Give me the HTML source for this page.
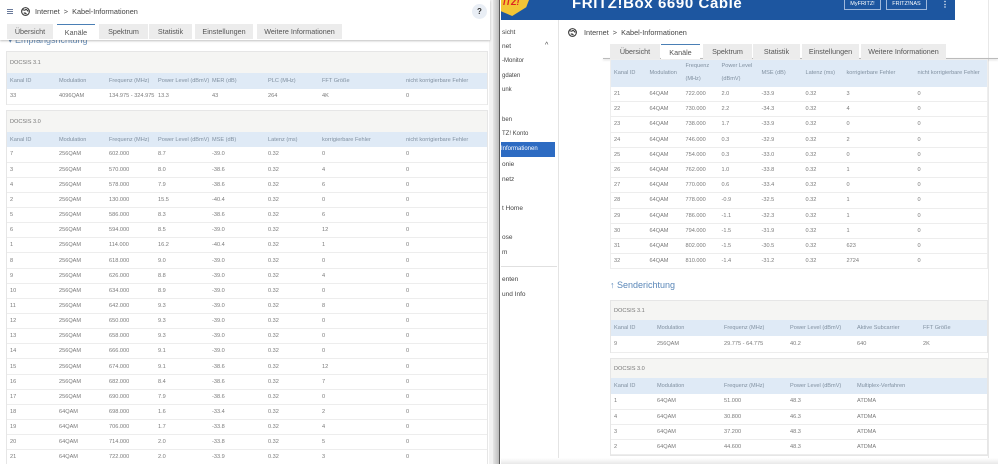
<!DOCTYPE html>
<html><head><meta charset="utf-8">
<style>
*{box-sizing:border-box;margin:0;padding:0}
body{width:998px;height:464px;overflow:hidden;background:#fff;font-family:"Liberation Sans",sans-serif;color:#555;position:relative}
.abs{position:absolute}
table{border-collapse:collapse;table-layout:fixed;position:absolute;font-size:5.6px;color:#7a7a7a}
td{padding-left:3px;white-space:nowrap;overflow:hidden;border-bottom:1px solid #ededed;vertical-align:middle}
tr.h td{background:#dfeaf6;color:#8090a0;border-bottom:none}
.box{position:absolute;background:#f5f5f3;border:1px solid #e6e6e6}
.box .t{position:absolute;left:3px;font-size:5.6px;color:#777}
.tab{position:absolute;height:15px;background:#ececec;font-size:7.2px;color:#555;text-align:center;line-height:16px}
.tab.a{background:#fff;border-top:1.5px solid #4a7fb5}
.side{position:absolute;left:502px;font-size:6.5px;color:#444}
</style></head><body>

<div class="abs" style="left:0;top:0;width:500px;height:464px;background:#fff;overflow:hidden">
  <div class="abs" style="left:0;top:0;width:490px;height:40px;background:#fff;box-shadow:0 1px 2px rgba(0,0,0,.25);z-index:2">
    <div class="abs" style="left:7px;top:9px;width:6px;height:1px;background:#6a7a9a;box-shadow:0 2px 0 #6a7a9a,0 4px 0 #6a7a9a"></div>
    <svg class="abs" style="left:21px;top:7px" width="9" height="9" viewBox="0 0 10 10"><circle cx="5" cy="5" r="4.3" fill="none" stroke="#333" stroke-width="1.2"/><path d="M2 3 Q4 4 5 3 T8 5 M3 7 Q5 6 6 8" stroke="#333" stroke-width="1.2" fill="none"/></svg>
    <div class="abs" style="left:35px;top:7px;font-size:7.3px;color:#444">Internet &nbsp;&gt;&nbsp; Kabel-Informationen</div>
    <div class="abs" style="left:472px;top:4px;width:15px;height:15px;border-radius:50%;background:#e9eef5;font-size:8px;font-weight:bold;text-align:center;line-height:15px;color:#333">?</div>
    <div class="tab" style="left:7px;top:24px;width:46px">Übersicht</div>
    <div class="tab a" style="left:57px;top:24px;width:38px">Kanäle</div>
    <div class="tab" style="left:99px;top:24px;width:49px">Spektrum</div>
    <div class="tab" style="left:149px;top:24px;width:43px">Statistik</div>
    <div class="tab" style="left:195px;top:24px;width:58px">Einstellungen</div>
    <div class="tab" style="left:257px;top:24px;width:85px">Weitere Informationen</div>
  </div>
  <div class="abs" style="left:8px;top:35px;font-size:9px;color:#6a8fb8">▾ Empfangsrichtung</div>

  <div class="box" style="left:6px;top:51px;width:482px;height:54px"><div class="t" style="top:8px">DOCSIS 3.1</div></div>
  <table style="left:7px;top:73px;width:480px">
    <colgroup><col style="width:49px"><col style="width:50px"><col style="width:49px"><col style="width:54px"><col style="width:56px"><col style="width:54px"><col style="width:84px"><col></colgroup>
    <tr class="h" style="height:16px"><td>Kanal ID</td><td>Modulation</td><td>Frequenz (MHz)</td><td>Power Level (dBmV)</td><td>MER (dB)</td><td>PLC (MHz)</td><td>FFT Größe</td><td>nicht korrigierbare Fehler</td></tr>
    <tr style="height:15px;background:#fff"><td>33</td><td>4096QAM</td><td>134.975 - 324.975</td><td>13.3</td><td>43</td><td>264</td><td>4K</td><td>0</td></tr>
  </table>

  <div class="box" style="left:6px;top:110px;width:482px;height:360px"><div class="t" style="top:8px">DOCSIS 3.0</div></div>
  <table style="left:7px;top:132px;width:480px;background:#fff">
    <colgroup><col style="width:49px"><col style="width:50px"><col style="width:49px"><col style="width:54px"><col style="width:56px"><col style="width:54px"><col style="width:84px"><col></colgroup>
    <tr class="h" style="height:15px"><td>Kanal ID</td><td>Modulation</td><td>Frequenz (MHz)</td><td>Power Level (dBmV)</td><td>MSE (dB)</td><td>Latenz (ms)</td><td>korrigierbare Fehler</td><td>nicht korrigierbare Fehler</td></tr>
    <tr style="height:15.15px"><td>7</td><td>256QAM</td><td>602.000</td><td>8.7</td><td>-39.0</td><td>0.32</td><td>0</td><td>0</td></tr>
    <tr style="height:15.15px"><td>3</td><td>256QAM</td><td>570.000</td><td>8.0</td><td>-38.6</td><td>0.32</td><td>4</td><td>0</td></tr>
    <tr style="height:15.15px"><td>4</td><td>256QAM</td><td>578.000</td><td>7.9</td><td>-38.6</td><td>0.32</td><td>6</td><td>0</td></tr>
    <tr style="height:15.15px"><td>2</td><td>256QAM</td><td>130.000</td><td>15.5</td><td>-40.4</td><td>0.32</td><td>0</td><td>0</td></tr>
    <tr style="height:15.15px"><td>5</td><td>256QAM</td><td>586.000</td><td>8.3</td><td>-38.6</td><td>0.32</td><td>6</td><td>0</td></tr>
    <tr style="height:15.15px"><td>6</td><td>256QAM</td><td>594.000</td><td>8.5</td><td>-39.0</td><td>0.32</td><td>12</td><td>0</td></tr>
    <tr style="height:15.15px"><td>1</td><td>256QAM</td><td>114.000</td><td>16.2</td><td>-40.4</td><td>0.32</td><td>1</td><td>0</td></tr>
    <tr style="height:15.15px"><td>8</td><td>256QAM</td><td>618.000</td><td>9.0</td><td>-39.0</td><td>0.32</td><td>0</td><td>0</td></tr>
    <tr style="height:15.15px"><td>9</td><td>256QAM</td><td>626.000</td><td>8.8</td><td>-39.0</td><td>0.32</td><td>4</td><td>0</td></tr>
    <tr style="height:15.15px"><td>10</td><td>256QAM</td><td>634.000</td><td>8.9</td><td>-39.0</td><td>0.32</td><td>0</td><td>0</td></tr>
    <tr style="height:15.15px"><td>11</td><td>256QAM</td><td>642.000</td><td>9.3</td><td>-39.0</td><td>0.32</td><td>8</td><td>0</td></tr>
    <tr style="height:15.15px"><td>12</td><td>256QAM</td><td>650.000</td><td>9.3</td><td>-39.0</td><td>0.32</td><td>0</td><td>0</td></tr>
    <tr style="height:15.15px"><td>13</td><td>256QAM</td><td>658.000</td><td>9.3</td><td>-39.0</td><td>0.32</td><td>0</td><td>0</td></tr>
    <tr style="height:15.15px"><td>14</td><td>256QAM</td><td>666.000</td><td>9.1</td><td>-39.0</td><td>0.32</td><td>0</td><td>0</td></tr>
    <tr style="height:15.15px"><td>15</td><td>256QAM</td><td>674.000</td><td>9.1</td><td>-38.6</td><td>0.32</td><td>12</td><td>0</td></tr>
    <tr style="height:15.15px"><td>16</td><td>256QAM</td><td>682.000</td><td>8.4</td><td>-38.6</td><td>0.32</td><td>7</td><td>0</td></tr>
    <tr style="height:15.15px"><td>17</td><td>256QAM</td><td>690.000</td><td>7.9</td><td>-38.6</td><td>0.32</td><td>0</td><td>0</td></tr>
    <tr style="height:15.15px"><td>18</td><td>64QAM</td><td>698.000</td><td>1.6</td><td>-33.4</td><td>0.32</td><td>2</td><td>0</td></tr>
    <tr style="height:15.15px"><td>19</td><td>64QAM</td><td>706.000</td><td>1.7</td><td>-33.8</td><td>0.32</td><td>4</td><td>0</td></tr>
    <tr style="height:15.15px"><td>20</td><td>64QAM</td><td>714.000</td><td>2.0</td><td>-33.8</td><td>0.32</td><td>5</td><td>0</td></tr>
    <tr style="height:15.15px"><td>21</td><td>64QAM</td><td>722.000</td><td>2.0</td><td>-33.9</td><td>0.32</td><td>3</td><td>0</td></tr>
  </table>
  <div class="abs" style="left:489px;top:0;width:6px;height:464px;background:#f2f2f2"></div>
  <div class="abs" style="left:493px;top:0;width:6px;height:464px;background:linear-gradient(90deg,#e6e6e6,#bbb)"></div>
  <div class="abs" style="left:499px;top:0;width:2px;height:464px;background:#5a5a5a"></div>
</div>

<div class="abs" style="left:501px;top:0;width:497px;height:464px;background:#fff;overflow:hidden">
  <div class="abs" style="left:0;top:0;width:454px;height:20px;background:#1d56a0"></div>
  <div class="abs" style="left:0;top:0;width:28px;height:16px;background:#f3c535;clip-path:polygon(0 0,100% 0,90% 45%,40% 100%,0 70%)"></div>
  <div class="abs" style="left:2px;top:-3px;font-size:9px;font-weight:bold;color:#d22;font-style:italic">ITZ!</div>
  <div class="abs" style="left:71px;top:-5px;font-size:15px;font-weight:bold;color:#fff;letter-spacing:.6px">FRITZ!Box 6690 Cable</div>
  <div class="abs" style="left:343px;top:0;width:37px;height:10px;border:1px solid #9fb8dc;border-top:none;font-size:5.5px;color:#fff;text-align:center;line-height:8px">MyFRITZ!</div>
  <div class="abs" style="left:385px;top:0;width:41px;height:10px;border:1px solid #9fb8dc;border-top:none;font-size:5.5px;color:#fff;text-align:center;line-height:8px">FRITZ!NAS</div>
  <div class="abs" style="left:440px;top:0;font-size:8px;color:#fff;font-weight:bold">⋮</div>
  <div class="abs" style="left:487px;top:0;width:1px;height:464px;background:#e8e8e8"></div>
  <div class="abs" style="left:0;top:20px;width:58px;height:444px;border-right:1px solid #e4e4e4"></div>
</div>
<div class="side" style="top:29px">sicht</div>
<div class="side" style="top:43px">net</div>
<div class="side" style="left:545px;top:42px;font-size:7px">^</div>
<div class="side" style="top:58px;font-size:6px">-Monitor</div>
<div class="side" style="top:73px;font-size:6px">gdaten</div>
<div class="side" style="top:87px;font-size:6px">unk</div>
<div class="side" style="top:117px;font-size:6px">ben</div>
<div class="side" style="top:131px;font-size:6px">TZ! Konto</div>
<div class="abs" style="left:501px;top:142px;width:54px;height:15px;background:#2d6bc2;font-size:6px;color:#fff;line-height:15px">Informationen</div>
<div class="side" style="top:161px">onie</div>
<div class="side" style="top:176px">netz</div>
<div class="side" style="top:205px">t Home</div>
<div class="side" style="top:234px">ose</div>
<div class="side" style="top:249px">m</div>
<div class="abs" style="left:501px;top:266px;width:56px;height:1px;background:#e0e0e0"></div>
<div class="side" style="top:276px">enten</div>
<div class="side" style="top:291px">und Info</div>

<svg class="abs" style="left:568px;top:28px" width="9" height="9" viewBox="0 0 10 10"><circle cx="5" cy="5" r="4.3" fill="none" stroke="#333" stroke-width="1.2"/><path d="M2 3 Q4 4 5 3 T8 5 M3 7 Q5 6 6 8" stroke="#333" stroke-width="1.2" fill="none"/></svg>
<div class="abs" style="left:584px;top:28px;font-size:7.3px;color:#444">Internet &nbsp;&gt;&nbsp; Kabel-Informationen</div>
<div class="abs" style="left:603px;top:58px;width:395px;height:1px;background:#bbb;box-shadow:0 1px 2px rgba(0,0,0,.2)"></div>
<div class="tab" style="left:610px;top:44px;width:50px">Übersicht</div>
<div class="tab a" style="left:661px;top:44px;width:39px">Kanäle</div>
<div class="tab" style="left:703px;top:44px;width:49px">Spektrum</div>
<div class="tab" style="left:753px;top:44px;width:47px">Statistik</div>
<div class="tab" style="left:802px;top:44px;width:57px">Einstellungen</div>
<div class="tab" style="left:861px;top:44px;width:85px">Weitere Informationen</div>

<table style="left:610px;top:59px;width:378px;background:#fff;border:1px solid #eee">
  <colgroup><col style="width:36px"><col style="width:36px"><col style="width:36px"><col style="width:40px"><col style="width:44px"><col style="width:41px"><col style="width:71px"><col></colgroup>
  <tr class="h" style="height:27px"><td>Kanal ID</td><td>Modulation</td><td style="line-height:13px">Frequenz<br>(MHz)</td><td style="line-height:13px">Power Level<br>(dBmV)</td><td>MSE (dB)</td><td>Latenz (ms)</td><td>korrigierbare Fehler</td><td>nicht korrigierbare Fehler</td></tr>
  <tr style="height:15.2px"><td>21</td><td>64QAM</td><td>722.000</td><td>2.0</td><td>-33.9</td><td>0.32</td><td>3</td><td>0</td></tr>
  <tr style="height:15.2px"><td>22</td><td>64QAM</td><td>730.000</td><td>2.2</td><td>-34.3</td><td>0.32</td><td>4</td><td>0</td></tr>
  <tr style="height:15.2px"><td>23</td><td>64QAM</td><td>738.000</td><td>1.7</td><td>-33.9</td><td>0.32</td><td>0</td><td>0</td></tr>
  <tr style="height:15.2px"><td>24</td><td>64QAM</td><td>746.000</td><td>0.3</td><td>-32.9</td><td>0.32</td><td>2</td><td>0</td></tr>
  <tr style="height:15.2px"><td>25</td><td>64QAM</td><td>754.000</td><td>0.3</td><td>-33.0</td><td>0.32</td><td>0</td><td>0</td></tr>
  <tr style="height:15.2px"><td>26</td><td>64QAM</td><td>762.000</td><td>1.0</td><td>-33.8</td><td>0.32</td><td>1</td><td>0</td></tr>
  <tr style="height:15.2px"><td>27</td><td>64QAM</td><td>770.000</td><td>0.6</td><td>-33.4</td><td>0.32</td><td>0</td><td>0</td></tr>
  <tr style="height:15.2px"><td>28</td><td>64QAM</td><td>778.000</td><td>-0.9</td><td>-32.5</td><td>0.32</td><td>1</td><td>0</td></tr>
  <tr style="height:15.2px"><td>29</td><td>64QAM</td><td>786.000</td><td>-1.1</td><td>-32.3</td><td>0.32</td><td>1</td><td>0</td></tr>
  <tr style="height:15.2px"><td>30</td><td>64QAM</td><td>794.000</td><td>-1.5</td><td>-31.9</td><td>0.32</td><td>1</td><td>0</td></tr>
  <tr style="height:15.2px"><td>31</td><td>64QAM</td><td>802.000</td><td>-1.5</td><td>-30.5</td><td>0.32</td><td>623</td><td>0</td></tr>
  <tr style="height:15.2px"><td>32</td><td>64QAM</td><td>810.000</td><td>-1.4</td><td>-31.2</td><td>0.32</td><td>2724</td><td>0</td></tr>
</table>

<div class="abs" style="left:610px;top:280px;font-size:9px;color:#5a87b8">↑ Senderichtung</div>

<div class="box" style="left:610px;top:300px;width:378px;height:53px"><div class="t" style="top:7px">DOCSIS 3.1</div></div>
<table style="left:611px;top:320px;width:376px;background:#fff">
  <colgroup><col style="width:43px"><col style="width:67px"><col style="width:66px"><col style="width:67px"><col style="width:66px"><col></colgroup>
  <tr class="h" style="height:16px"><td>Kanal ID</td><td>Modulation</td><td>Frequenz (MHz)</td><td>Power Level (dBmV)</td><td>Aktive Subcarrier</td><td>FFT Größe</td></tr>
  <tr style="height:16px"><td>9</td><td>256QAM</td><td>29.775 - 64.775</td><td>40.2</td><td>640</td><td>2K</td></tr>
</table>

<div class="box" style="left:610px;top:358px;width:378px;height:98px"><div class="t" style="top:7px">DOCSIS 3.0</div></div>
<table style="left:611px;top:378px;width:376px;background:#fff">
  <colgroup><col style="width:43px"><col style="width:67px"><col style="width:66px"><col style="width:67px"><col style="width:66px"><col></colgroup>
  <tr class="h" style="height:16px"><td>Kanal ID</td><td>Modulation</td><td>Frequenz (MHz)</td><td>Power Level (dBmV)</td><td>Multiplex-Verfahren</td><td></td></tr>
  <tr style="height:15.2px"><td>1</td><td>64QAM</td><td>51.000</td><td>48.3</td><td>ATDMA</td><td></td></tr>
  <tr style="height:15.2px"><td>4</td><td>64QAM</td><td>30.800</td><td>46.3</td><td>ATDMA</td><td></td></tr>
  <tr style="height:15.2px"><td>3</td><td>64QAM</td><td>37.200</td><td>48.3</td><td>ATDMA</td><td></td></tr>
  <tr style="height:15.2px"><td>2</td><td>64QAM</td><td>44.600</td><td>48.3</td><td>ATDMA</td><td></td></tr>
</table>
<div class="abs" style="left:501px;top:458px;width:497px;height:6px;background:linear-gradient(#fff,#e8e8e8)"></div>
</body></html>
